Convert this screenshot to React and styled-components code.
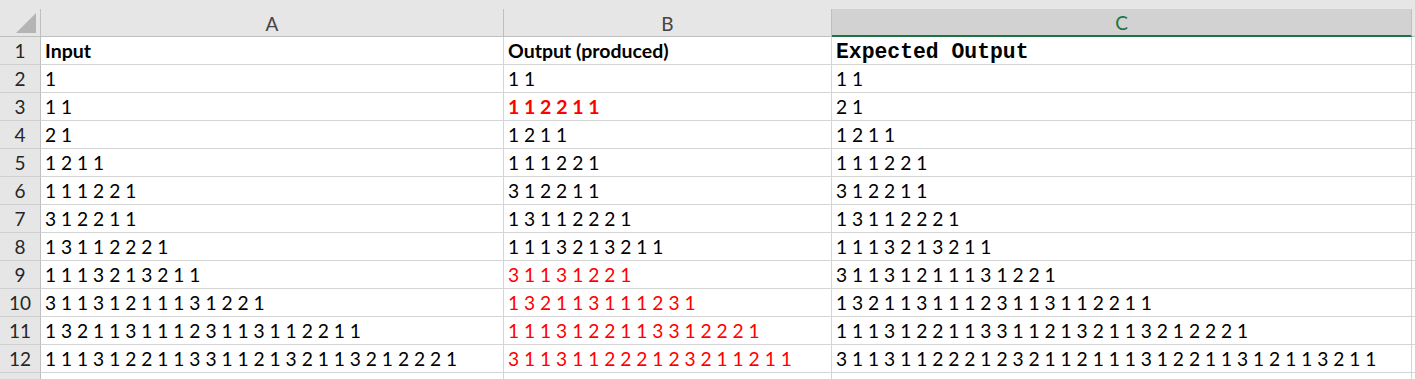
import React from "react";
import styled, { createGlobalStyle } from "styled-components";

const Global = createGlobalStyle`
  html, body { margin: 0; padding: 0; background: #e6e6e6; }
  body { font-family: "Lato", "Open Sans", sans-serif; }
`;

const Page = styled.div`
  width: 1415px;
  height: 379px;
  overflow: hidden;
  background: #e6e6e6;
  padding-top: 9px;
  box-sizing: border-box;
`;

const Sheet = styled.div`
  display: grid;
  grid-template-columns: 41px 463px 328px 580px 1fr;
  grid-auto-rows: 28px;
  background: #ffffff;
`;

const Corner = styled.div`
  position: relative;
  background: #e6e6e6;
  border-right: 1px solid #bfbfbf;
  border-bottom: 1px solid #bfbfbf;
  box-sizing: border-box;
  &::after {
    content: "";
    position: absolute;
    right: 4px;
    bottom: 3px;
    width: 0;
    height: 0;
    border-left: 20px solid transparent;
    border-bottom: 20px solid #b4b4b4;
  }
`;

const ColHead = styled.div`
  display: flex;
  align-items: center;
  justify-content: center;
  background: ${(p) => (p.$selected ? "#d2d2d2" : "#e6e6e6")};
  color: ${(p) => (p.$selected ? "#217346" : "#444444")};
  border-right: 1px solid ${(p) => (p.$last ? "transparent" : "#bfbfbf")};
  border-bottom: ${(p) => (p.$selected ? "2px solid #217346" : "1px solid #bfbfbf")};
  box-sizing: border-box;
  font-size: 19px;
  padding-top: 1px;
`;

const RowHead = styled.div`
  display: flex;
  align-items: center;
  justify-content: center;
  background: #e6e6e6;
  color: #262626;
  border-right: 1px solid #bfbfbf;
  border-bottom: 1px solid #d0d0d0;
  box-sizing: border-box;
  font-size: 19px;
`;

const Cell = styled.div`
  display: flex;
  align-items: center;
  padding-left: 4px;
  padding-top: ${(p) => (p.$mono ? "3px" : "0")};
  border-right: 1px solid ${(p) => (p.$last ? "transparent" : "#d4d4d4")};
  border-bottom: 1px solid #d4d4d4;
  box-sizing: border-box;
  white-space: pre;
  overflow: hidden;
  color: ${(p) => (p.$red ? "#ff0000" : "#000000")};
  font-weight: ${(p) => (p.$bold ? 700 : 400)};
  font-family: ${(p) =>
    p.$mono ? '"Liberation Mono", "Courier New", monospace' : '"Lato", "Open Sans", sans-serif'};
  font-size: ${(p) => (p.$mono ? "21.4px" : p.$bold ? "19.5px" : "19.2px")};
`;

const rows = [
  [
    { t: "Input", bold: true },
    { t: "Output (produced)", bold: true },
    { t: "Expected Output", bold: true, mono: true },
  ],
  [{ t: "1" }, { t: "1 1" }, { t: "1 1" }],
  [{ t: "1 1" }, { t: "1 1 2 2 1 1", bold: true, red: true }, { t: "2 1" }],
  [{ t: "2 1" }, { t: "1 2 1 1" }, { t: "1 2 1 1" }],
  [{ t: "1 2 1 1" }, { t: "1 1 1 2 2 1" }, { t: "1 1 1 2 2 1" }],
  [{ t: "1 1 1 2 2 1" }, { t: "3 1 2 2 1 1" }, { t: "3 1 2 2 1 1" }],
  [{ t: "3 1 2 2 1 1" }, { t: "1 3 1 1 2 2 2 1" }, { t: "1 3 1 1 2 2 2 1" }],
  [{ t: "1 3 1 1 2 2 2 1" }, { t: "1 1 1 3 2 1 3 2 1 1" }, { t: "1 1 1 3 2 1 3 2 1 1" }],
  [{ t: "1 1 1 3 2 1 3 2 1 1" }, { t: "3 1 1 3 1 2 2 1", red: true }, { t: "3 1 1 3 1 2 1 1 1 3 1 2 2 1" }],
  [
    { t: "3 1 1 3 1 2 1 1 1 3 1 2 2 1" },
    { t: "1 3 2 1 1 3 1 1 1 2 3 1", red: true },
    { t: "1 3 2 1 1 3 1 1 1 2 3 1 1 3 1 1 2 2 1 1" },
  ],
  [
    { t: "1 3 2 1 1 3 1 1 1 2 3 1 1 3 1 1 2 2 1 1" },
    { t: "1 1 1 3 1 2 2 1 1 3 3 1 2 2 2 1", red: true },
    { t: "1 1 1 3 1 2 2 1 1 3 3 1 1 2 1 3 2 1 1 3 2 1 2 2 2 1" },
  ],
  [
    { t: "1 1 1 3 1 2 2 1 1 3 3 1 1 2 1 3 2 1 1 3 2 1 2 2 2 1" },
    { t: "3 1 1 3 1 1 2 2 2 1 2 3 2 1 1 2 1 1", red: true },
    { t: "3 1 1 3 1 1 2 2 2 1 2 3 2 1 1 2 1 1 1 3 1 2 2 1 1 3 1 2 1 1 3 2 1 1" },
  ],
  [{ t: "" }, { t: "" }, { t: "" }],
];

export default function App() {
  return (
    <>
      <Global />
      <Page>
        <Sheet>
          <Corner />
          <ColHead>A</ColHead>
          <ColHead>B</ColHead>
          <ColHead $selected>C</ColHead>
          <ColHead $last />
          {rows.map((r, i) => (
            <React.Fragment key={i}>
              <RowHead>{i < 12 ? i + 1 : ""}</RowHead>
              {r.map((c, j) => (
                <Cell key={j} $bold={c.bold} $red={c.red} $mono={c.mono}>
                  {c.t}
                </Cell>
              ))}
              <Cell $last />
            </React.Fragment>
          ))}
        </Sheet>
      </Page>
    </>
  );
}
